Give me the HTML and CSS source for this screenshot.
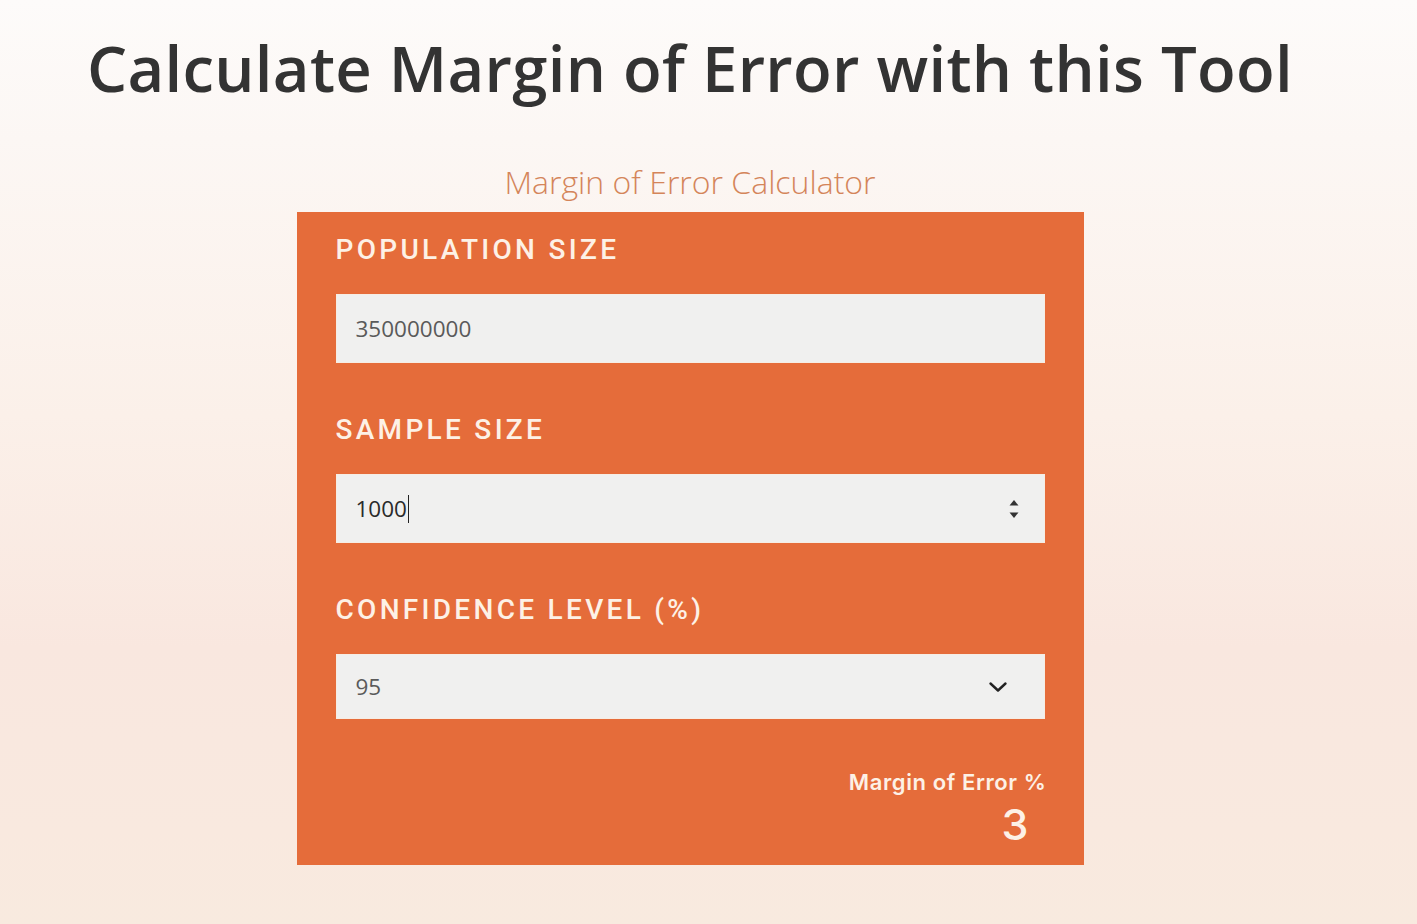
FILE: index.html
```html
<!DOCTYPE html>
<html lang="en">
<head>
<meta charset="utf-8">
<title>Margin of Error Calculator</title>
<link rel="stylesheet" href="styles.css">
</head>
<body>
<main class="page">
  <h1 class="title">Calculate Margin of Error with this Tool</h1>
  <section class="calc">
    <h2 class="calc-name">Margin of Error Calculator</h2>
    <div class="panel">
      <div class="field">
        <label class="label">POPULATION SIZE</label>
        <div class="box"><span class="value">350000000</span></div>
      </div>
      <div class="field">
        <label class="label">SAMPLE SIZE</label>
        <div class="box spinbox"><span class="value dark">1000<span class="caret"></span></span>
          <svg class="spin" width="12" height="22" viewBox="0 0 12 22"><path d="M6 2 L10.5 7.5 H1.5 Z" fill="#333"/><path d="M6 20 L10.5 14.5 H1.5 Z" fill="#333"/></svg>
        </div>
      </div>
      <div class="field">
        <label class="label">CONFIDENCE LEVEL (%)</label>
        <div class="box select"><span class="value">95</span>
          <svg class="chev" width="20" height="12" viewBox="0 0 20 12"><path d="M2.5 2.5 L10 9.5 L17.5 2.5" fill="none" stroke="#222" stroke-width="2.4" stroke-linecap="round" stroke-linejoin="round"/></svg>
        </div>
      </div>
      <div class="result">
        <div class="result-label">Margin of Error %</div>
        <div class="result-value">3</div>
      </div>
    </div>
  </section>
</main>
</body>
</html>
```
FILE: styles.css
```css
html, body {
  margin: 0;
  padding: 0;
}
body {
  width: 1417px;
  height: 924px;
  overflow: hidden;
  background: linear-gradient(to bottom, #fdfbfa 0%, #fcf7f4 15%, #fbf0e9 45%, #f9e7df 70%, #f9e9df 90%, #f8eadf 100%);
  font-family: "Open Sans", sans-serif;
}
.page {
  display: flex;
  flex-direction: column;
  align-items: center;
  padding-right: 37px;
}
.title {
  margin: 28px 0 0 0;
  font-family: "Open Sans", sans-serif;
  font-weight: 600;
  font-size: 63.4px;
  line-height: 80px;
  color: #333333;
  letter-spacing: 0.3px;
}
.calc {
  display: flex;
  flex-direction: column;
  align-items: center;
  margin-top: 53px;
}
.calc-name {
  margin: 0;
  font-family: "Open Sans", sans-serif;
  font-weight: 300;
  font-size: 32px;
  line-height: 42px;
  color: #d4855a;
}
.panel {
  margin-top: 9px;
  width: 787px;
  height: 653px;
  box-sizing: border-box;
  background: #e56c3a;
  padding: 18px 39px 0 39px;
  display: flex;
  flex-direction: column;
}
.field {
  display: flex;
  flex-direction: column;
  margin-bottom: 47px;
}
.label {
  font-family: Roboto, sans-serif;
  font-weight: 500;
  font-size: 28px;
  line-height: 40px;
  letter-spacing: 3.3px;
  color: #fdf1e6;
  margin-bottom: 24px;
}
.box {
  height: 69px;
  box-sizing: border-box;
  background: #f0f0ef;
  border: 1px solid #f6ede4;
  display: flex;
  align-items: center;
  padding: 0 27px 0 19px;
}
.box.spinbox {
  padding-right: 24px;
}
.box.select {
  height: 65px;
  padding-right: 36px;
}
.value {
  flex: 1;
  font-family: "Open Sans", sans-serif;
  font-size: 22.5px;
  color: #5a5a5a;
  display: flex;
  align-items: center;
}
.value.dark {
  color: #2a2a2a;
}
.caret {
  display: inline-block;
  width: 1.5px;
  height: 28px;
  background: #222;
  margin-left: 1px;
}
.spin, .chev {
  flex: none;
}
.result {
  margin-top: 2px;
  display: flex;
  flex-direction: column;
  align-items: flex-end;
}
.result-label {
  font-family: Inter, sans-serif;
  font-weight: 600;
  font-size: 22px;
  letter-spacing: 0.6px;
  line-height: 28px;
  color: #fdf1e6;
  margin-top: 0;
  margin-right: -2px;
}
.result-value {
  font-family: Inter, sans-serif;
  font-weight: 500;
  font-size: 43px;
  line-height: 52px;
  color: #fdf1e6;
  margin-right: 16px;
  margin-top: 2px;
}
```
